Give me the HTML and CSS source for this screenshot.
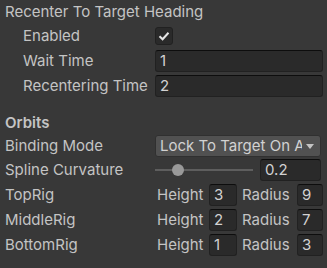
FILE: index.html
```html
<!DOCTYPE html>
<html lang="en">
<head>
    <meta charset="UTF-8">
    <title>Orbits Inspector</title>
    <link rel="stylesheet" href="styles.css">
</head>
<body>
    <div class="panel">
        <div class="row header">Recenter To Target Heading</div>
        <div class="row">
            <div class="label indent">Enabled</div>
            <div class="checkbox">
                <svg width="12" height="10" viewBox="0 0 12 10"><path d="M1.5 5.2 L4.6 8.2 L10.5 1.8" fill="none" stroke="#e6e6e6" stroke-width="2"/></svg>
            </div>
        </div>
        <div class="row">
            <div class="label indent">Wait Time</div>
            <div class="field wide">1</div>
        </div>
        <div class="row">
            <div class="label indent">Recentering Time</div>
            <div class="field wide">2</div>
        </div>

        <div class="row section">Orbits</div>
        <div class="row binding">
            <div class="label">Binding Mode</div>
            <div class="dropdown">
                <span class="dropdown-text">Lock To Target On Assign</span>
                <span class="arrow"></span>
            </div>
        </div>
        <div class="row">
            <div class="label">Spline Curvature</div>
            <div class="slider">
                <div class="track"></div>
                <div class="thumb"></div>
            </div>
            <div class="field float">0.2</div>
        </div>
        <div class="row">
            <div class="label">TopRig</div>
            <div class="sub-label">Height</div>
            <div class="field small">3</div>
            <div class="sub-label radius">Radius</div>
            <div class="field tiny">9</div>
        </div>
        <div class="row">
            <div class="label">MiddleRig</div>
            <div class="sub-label">Height</div>
            <div class="field small">2</div>
            <div class="sub-label radius">Radius</div>
            <div class="field tiny">7</div>
        </div>
        <div class="row">
            <div class="label">BottomRig</div>
            <div class="sub-label">Height</div>
            <div class="field small">1</div>
            <div class="sub-label radius">Radius</div>
            <div class="field tiny">3</div>
        </div>
    </div>
</body>
</html>
```

FILE: styles.css
```css
body {
    margin: 0;
    background-color: #383838;
    font-family: Inter, "Noto Sans", sans-serif;
    font-size: 15px;
    color: #c4c4c4;
}
.panel {
    padding: 0 6px 0 5px;
}
.row {
    display: flex;
    align-items: center;
    height: 25px;
    white-space: nowrap;
}
.row.header {
    height: 23px;
}
.row.section {
    height: 23px;
    margin-top: 13px;
    font-weight: 600;
}
.row.binding {
    height: 23px;
}
.label {
    width: 150px;
    flex-shrink: 0;
}
.label.indent {
    padding-left: 18px;
    width: 132px;
}
.checkbox {
    width: 16px;
    height: 16px;
    background-color: #2a2a2a;
    border: 1px solid #212121;
    border-radius: 3px;
    display: flex;
    align-items: center;
    justify-content: center;
}
.field {
    height: 20px;
    line-height: 20px;
    background-color: #2a2a2a;
    border: 1px solid #212121;
    border-top-color: #0d0d0d;
    border-radius: 3px;
    padding-left: 4px;
    box-sizing: content-box;
    color: #d2d2d2;
    flex-shrink: 0;
}
.field.wide {
    width: 162px;
}
.field.float {
    width: 55px;
    margin-left: 7px;
}
.field.small {
    width: 22px;
}
.field.tiny {
    width: 20px;
}
.dropdown {
    position: relative;
    width: 164px;
    height: 20px;
    background-color: #515151;
    border: 1px solid #303030;
    border-radius: 3px;
    overflow: hidden;
    display: flex;
    align-items: center;
}
.dropdown-text {
    display: block;
    width: 142px;
    padding-left: 4px;
    overflow: hidden;
    color: #d2d2d2;
}
.arrow {
    position: absolute;
    right: 6px;
    top: 8px;
    width: 0;
    height: 0;
    border-left: 4px solid transparent;
    border-right: 4px solid transparent;
    border-top: 5px solid #c4c4c4;
}
.slider {
    position: relative;
    width: 98px;
    height: 14px;
    flex-shrink: 0;
}
.track {
    position: absolute;
    left: 0;
    right: 0;
    top: 6px;
    height: 2px;
    background-color: #5e5e5e;
}
.thumb {
    position: absolute;
    left: 17px;
    top: 1px;
    width: 12px;
    height: 12px;
    border-radius: 50%;
    background-color: #999999;
}
.sub-label {
    width: 52px;
    padding-left: 2px;
    flex-shrink: 0;
}
.sub-label.radius {
    width: 55px;
    padding-left: 5px;
}
```
